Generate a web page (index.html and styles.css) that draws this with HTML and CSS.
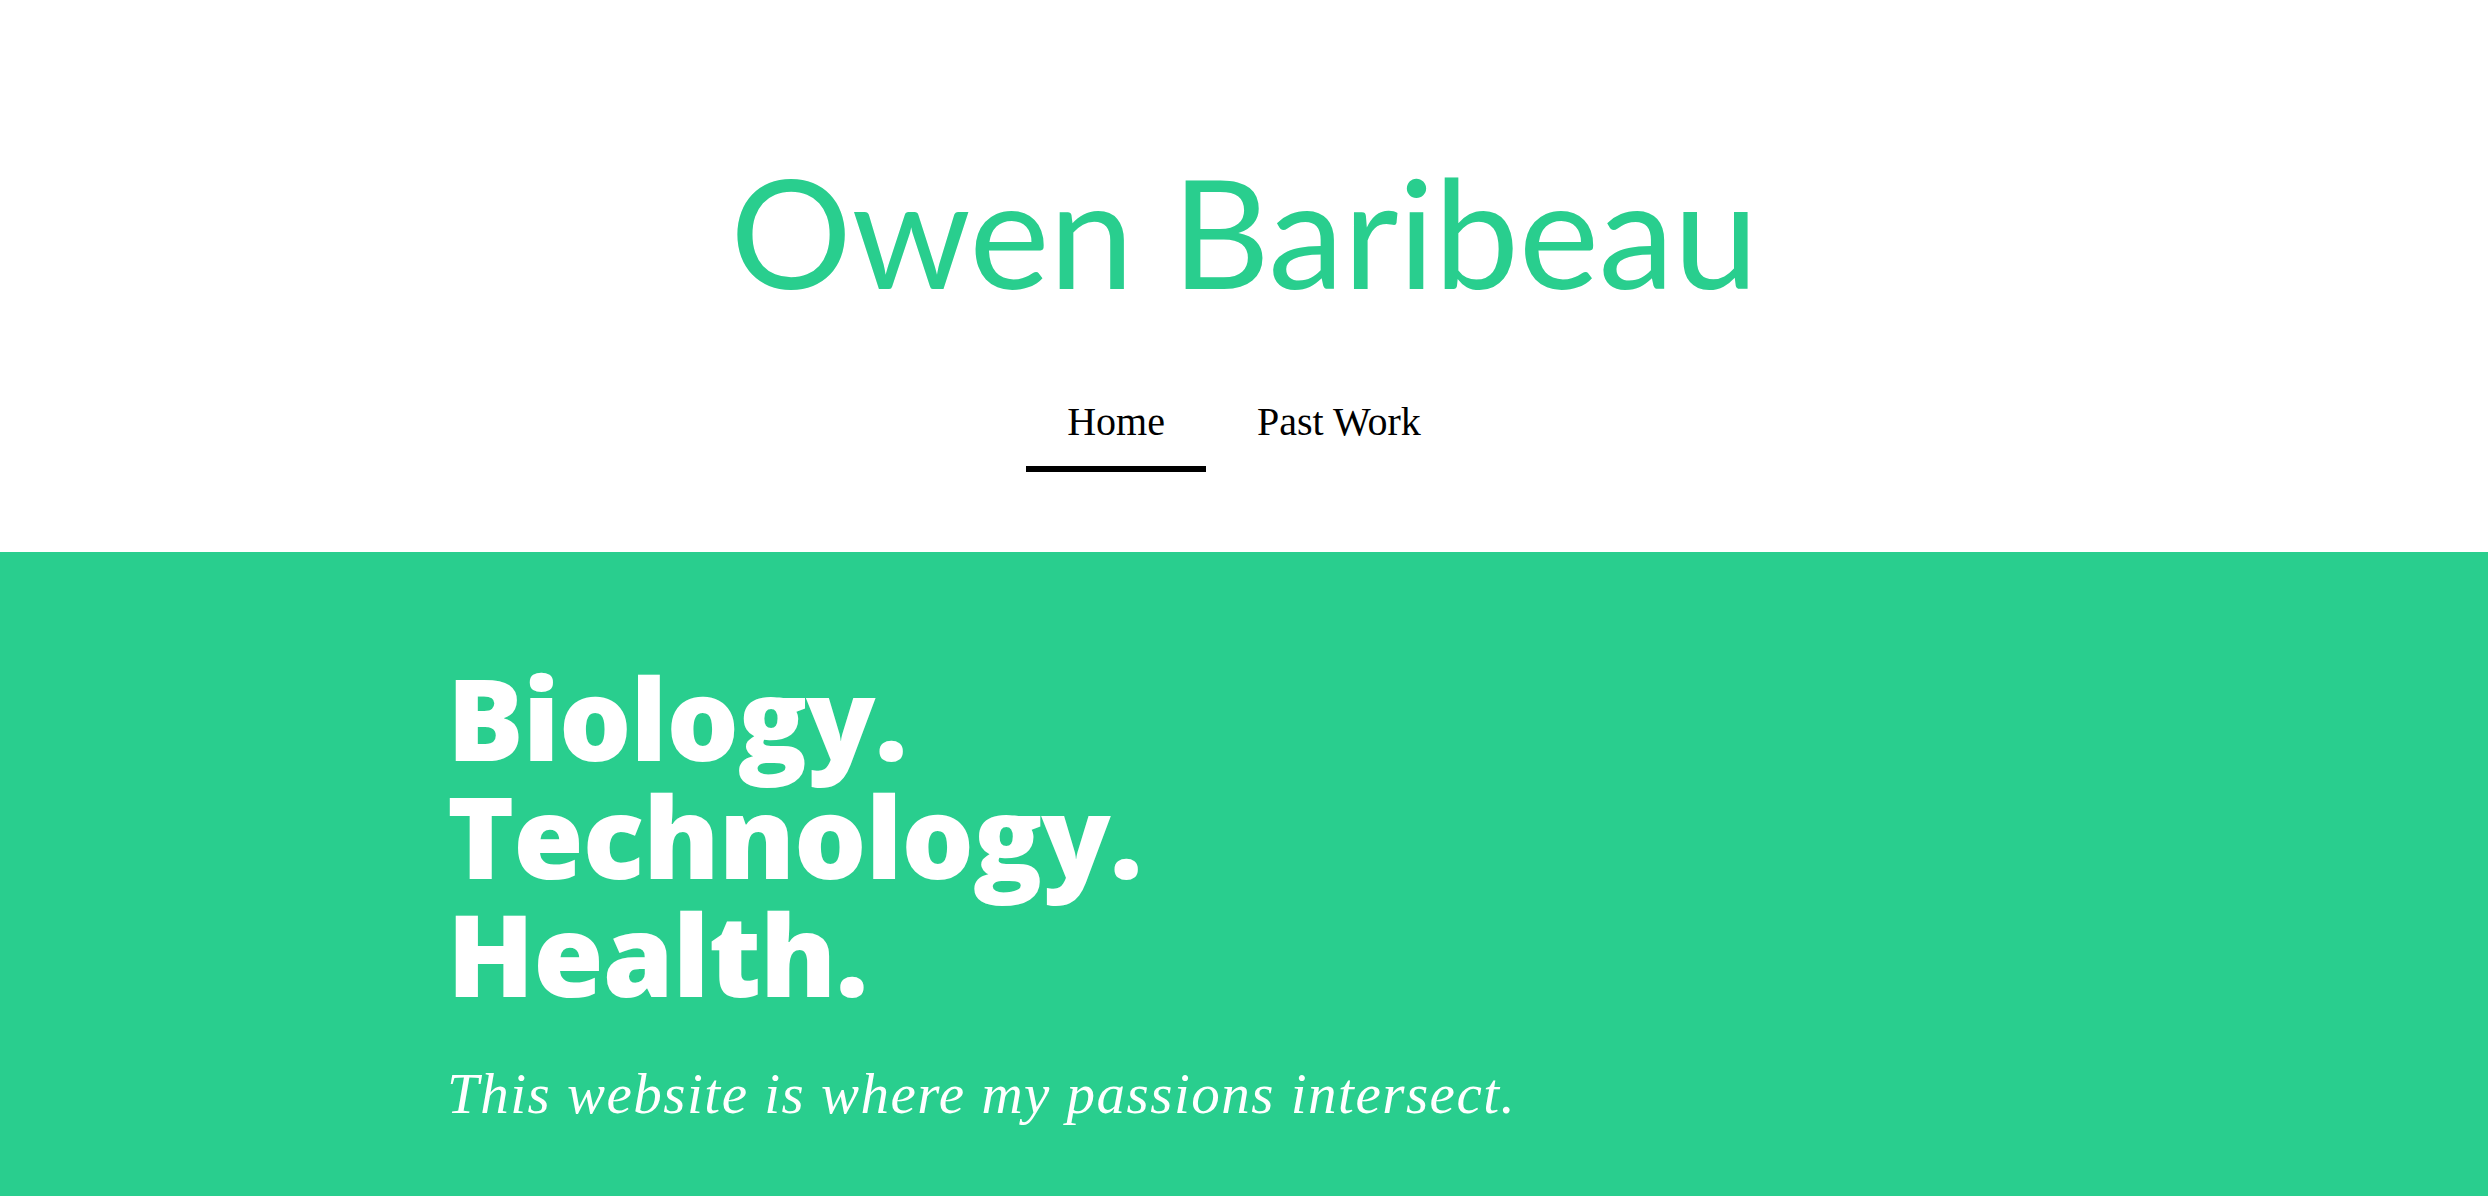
FILE: index.html
```html
<!DOCTYPE html>
<html lang="en">
<head>
<meta charset="utf-8">
<title>Owen Baribeau</title>
<link rel="stylesheet" href="styles.css">
</head>
<body>
<header class="site-header">
  <h1 class="site-title">Owen Baribeau</h1>
  <nav class="site-nav">
    <a class="nav-link active" href="#">Home</a>
    <a class="nav-link" href="#">Past Work</a>
  </nav>
</header>
<section class="hero">
  <div class="hero-inner">
    <h2 class="hero-title">Biology.<br>Technology.<br>Health.</h2>
    <p class="hero-sub">This website is where my passions intersect.</p>
  </div>
</section>
</body>
</html>
```
FILE: styles.css
```css
html, body {
  margin: 0;
  padding: 0;
  background: #ffffff;
}
body {
  min-height: 1196px;
  display: flex;
  flex-direction: column;
}
.site-header {
  height: 552px;
  box-sizing: border-box;
  padding-top: 154px;
  display: flex;
  flex-direction: column;
  align-items: center;
}
.site-title {
  margin: 0;
  font-family: "Lato", sans-serif;
  font-weight: 400;
  font-size: 152px;
  line-height: 1;
  color: #29ce8e;
  letter-spacing: -0.5px;
}
.site-nav {
  margin-top: 96px;
  display: flex;
  gap: 10px;
}
.nav-link {
  font-family: "Liberation Serif", serif;
  font-size: 40px;
  line-height: 1;
  color: #000;
  text-decoration: none;
  padding: 0 41px 24px;
  border-bottom: 6px solid transparent;
}
.nav-link.active {
  border-bottom-color: #000;
}
.hero {
  flex: 1;
  background: #29ce8e;
  color: #fff;
}
.hero-inner {
  padding: 106px 0 0 447px;
}
.hero-title {
  margin: 0;
  font-family: "Open Sans", sans-serif;
  font-weight: 800;
  font-size: 114px;
  line-height: 118px;
  letter-spacing: -1px;
}
.hero-sub {
  margin: 48px 0 0;
  font-family: "Liberation Serif", serif;
  font-style: italic;
  font-size: 57px;
  line-height: 1.2;
  letter-spacing: 1.5px;
}
```
